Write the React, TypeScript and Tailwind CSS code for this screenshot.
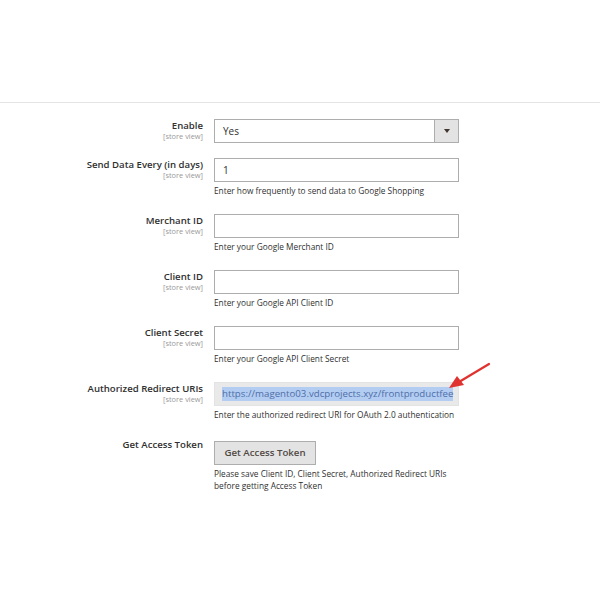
import type { ReactNode } from 'react';

const FONT = { fontFamily: '"Open Sans", "Noto Sans", sans-serif' };

function Row({
  label,
  scope = true,
  note,
  children,
  className = '',
}: {
  label: string;
  scope?: boolean;
  note?: ReactNode;
  children: ReactNode;
  className?: string;
}) {
  return (
    <div className={`flex items-start ${className}`}>
      <div className="w-[203px] shrink-0 pt-[2px] text-right leading-none">
        <p className="text-[9.6px] font-semibold text-[#303030]">{label}</p>
        {scope && <p className="mt-[2px] text-[7.4px] text-[#999]">[store view]</p>}
      </div>
      <div className="ml-[11px] w-[245px]">
        {children}
        {note && <p className="mt-[3px] text-[8.3px] leading-[12px] text-[#303030]">{note}</p>}
      </div>
    </div>
  );
}

function TextBox({ value = '' }: { value?: string }) {
  return (
    <div className="flex h-[24px] items-center border border-[#adadad] bg-white px-[8px] text-[10px] text-[#303030]">
      {value}
    </div>
  );
}

export default function App() {
  return (
    <div className="relative h-[600px] w-[600px] bg-white" style={FONT}>
      <div className="h-[103px] border-b border-[#e3e3e3]" />

      <div className="pt-[16px]">
        <Row label="Enable">
          <div className="flex h-[24px] border border-[#adadad] bg-white text-[10px] text-[#303030]">
            <span className="flex flex-1 items-center px-[8px]">Yes</span>
            <span className="flex w-[24px] items-center justify-center border-l border-[#adadad] bg-[#e3e3e3]">
              <svg width="6" height="4" viewBox="0 0 6 4">
                <path d="M0 0h6L3 4z" fill="#41362f" />
              </svg>
            </span>
          </div>
        </Row>

        <Row
          className="mt-[15px]"
          label="Send Data Every (in days)"
          note="Enter how frequently to send data to Google Shopping"
        >
          <TextBox value="1" />
        </Row>

        <Row className="mt-[17px]" label="Merchant ID" note="Enter your Google Merchant ID">
          <TextBox />
        </Row>

        <Row className="mt-[17px]" label="Client ID" note="Enter your Google API Client ID">
          <TextBox />
        </Row>

        <Row className="mt-[17px]" label="Client Secret" note="Enter your Google API Client Secret">
          <TextBox />
        </Row>

        <Row
          className="mt-[17px]"
          label="Authorized Redirect URIs"
          note="Enter the authorized redirect URI for OAuth 2.0 authentication"
        >
          <div className="flex h-[24px] items-center overflow-hidden whitespace-nowrap border border-[#e3e3e3] bg-[#e9e9e9] px-[7px] text-[9.7px] text-[#4f6ea8]">
            <span className="bg-[#b3cdf2]">https://magento03.vdcprojects.xyz/frontproductfee</span>
          </div>
        </Row>

        <Row
          className="mt-[17px]"
          label="Get Access Token"
          scope={false}
          note={
            <>
              Please save Client ID, Client Secret, Authorized Redirect URIs
              <br />
              before getting Access Token
            </>
          }
        >
          <button className="h-[24px] w-[102px] border border-[#adadad] bg-[#e3e3e3] text-[9.7px] font-semibold text-[#514943]">
            Get Access Token
          </button>
        </Row>
      </div>

      {/* red annotation arrow */}
      <svg className="absolute left-[445px] top-[360px]" width="50" height="32" viewBox="0 0 50 32">
        <line x1="44" y1="4" x2="14" y2="22" stroke="#e0322f" strokeWidth="2.2" strokeLinecap="round" />
        <path d="M4 28 L12 16 L19 25 Z" fill="#e0322f" />
      </svg>
    </div>
  );
}
